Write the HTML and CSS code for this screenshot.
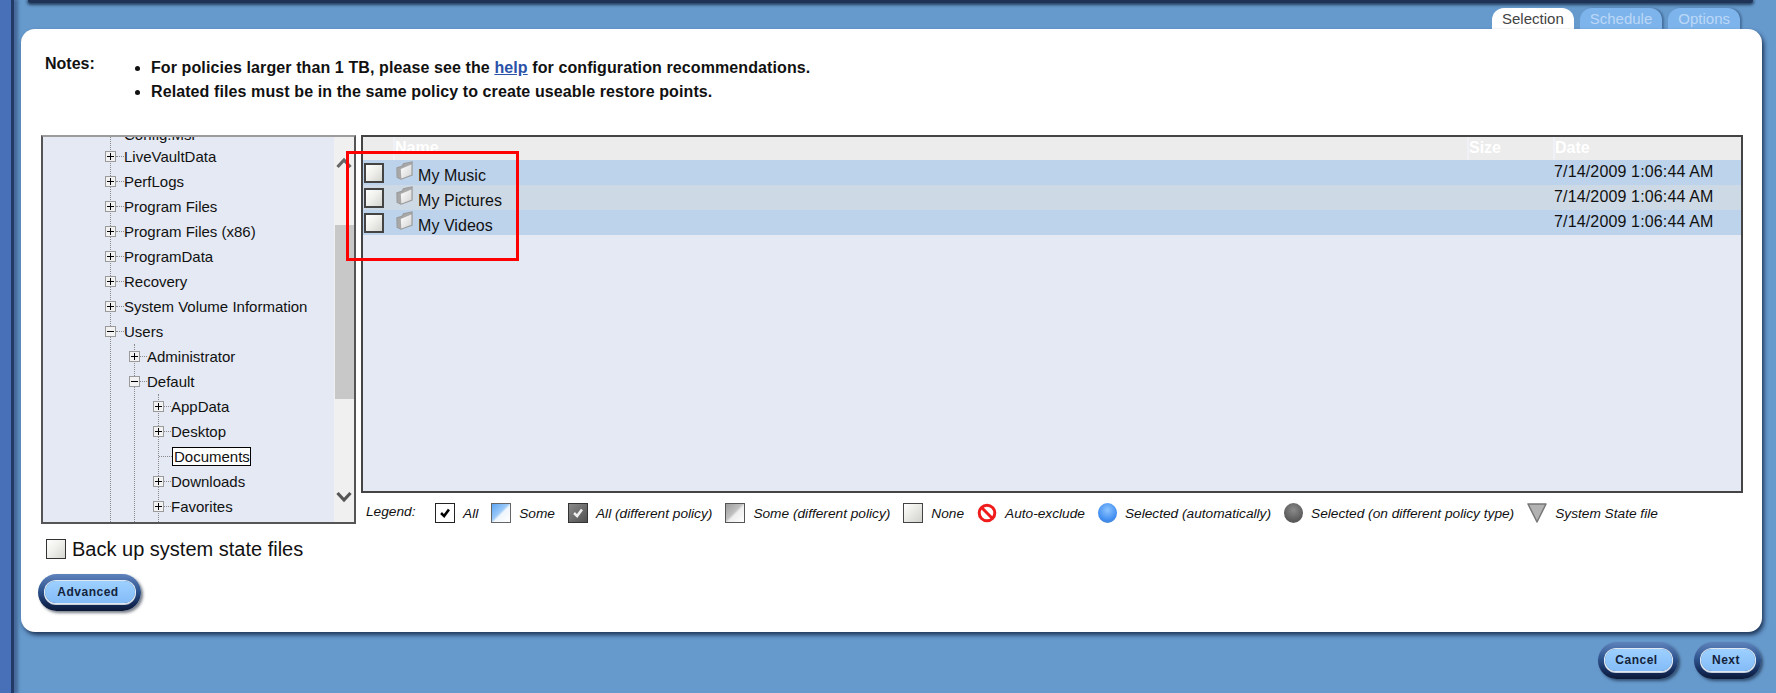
FILE: index.html
```html
<!DOCTYPE html>
<html lang="en">
<head>
<meta charset="utf-8">
<title>Selection</title>
<link rel="stylesheet" href="styles.css">
</head>
<body>
<svg class="defs" width="0" height="0" aria-hidden="true">
  <defs>
    <linearGradient id="fg" x1="0" y1="0" x2="1" y2="1">
      <stop offset="0" stop-color="#ffffff"/>
      <stop offset="1" stop-color="#d4d4d4"/>
    </linearGradient>
    <symbol id="folder" viewBox="0 0 16 18">
      <path d="M.8 6.500 5.500 5 7 2.500 15.200 .8V13.500L4.800 17.200 1 15.500Z" fill="#a8a8a8" stroke="#9a9a9a" stroke-width="1"/>
      <path d="M4.500 7.500 14.500 3.200V13L5 16.500Z" fill="url(#fg)"/>
    </symbol>
    <symbol id="check" viewBox="0 0 16 16">
      <path d="M3.500 8 7 11.500 12.500 4" fill="none" stroke="currentColor" stroke-width="3"/>
    </symbol>
  </defs>
</svg>
<div class="rail"></div>
<div class="main">
  <div class="topbar"></div>
  <nav class="tabs">
    <div class="tab tab-on">Selection</div>
    <div class="tab">Schedule</div>
    <div class="tab">Options</div>
  </nav>
  <section class="panel">
    <div class="notes">
      <div class="notes-label">Notes:</div>
      <ul class="notes-list">
        <li>For policies larger than 1 TB, please see the <a href="#">help</a> for configuration recommendations.</li>
        <li>Related files must be in the same policy to create useable restore points.</li>
      </ul>
    </div>
    <div class="work">
      <div class="tree">
        <div class="tree-view">
          <ul class="branch branch-root">
            <li><div class="row row-first"><span class="leaf"></span><span class="label">Config.Msi</span></div></li>
            <li><div class="row"><span class="exp"></span><span class="dash"></span><span class="label">LiveVaultData</span></div></li>
            <li><div class="row"><span class="exp"></span><span class="dash"></span><span class="label">PerfLogs</span></div></li>
            <li><div class="row"><span class="exp"></span><span class="dash"></span><span class="label">Program Files</span></div></li>
            <li><div class="row"><span class="exp"></span><span class="dash"></span><span class="label">Program Files (x86)</span></div></li>
            <li><div class="row"><span class="exp"></span><span class="dash"></span><span class="label">ProgramData</span></div></li>
            <li><div class="row"><span class="exp"></span><span class="dash"></span><span class="label">Recovery</span></div></li>
            <li><div class="row"><span class="exp"></span><span class="dash"></span><span class="label">System Volume Information</span></div></li>
            <li><div class="row"><span class="exp exp-open"></span><span class="dash"></span><span class="label">Users</span></div>
              <ul class="branch">
                <li><div class="row"><span class="exp"></span><span class="dash"></span><span class="label">Administrator</span></div></li>
                <li><div class="row"><span class="exp exp-open"></span><span class="dash"></span><span class="label">Default</span></div>
                  <ul class="branch">
                    <li><div class="row"><span class="exp"></span><span class="dash"></span><span class="label">AppData</span></div></li>
                    <li><div class="row"><span class="exp"></span><span class="dash"></span><span class="label">Desktop</span></div></li>
                    <li><div class="row"><span class="leaf"></span><span class="label label-sel">Documents</span></div></li>
                    <li><div class="row"><span class="exp"></span><span class="dash"></span><span class="label">Downloads</span></div></li>
                    <li><div class="row"><span class="exp"></span><span class="dash"></span><span class="label">Favorites</span></div></li>
                    <li><div class="row"><span class="exp"></span></div></li>
                  </ul>
                </li>
              </ul>
            </li>
          </ul>
        </div>
        <div class="scroll">
          <svg class="chev chev-up" viewBox="0 0 16 12"><path d="M1.500 10 8 3l6.500 7" fill="none" stroke="#666" stroke-width="3.200"/></svg>
          <div class="thumb"></div>
          <svg class="chev chev-down" viewBox="0 0 16 12"><path d="M1.500 2 8 9l6.500-7" fill="none" stroke="#555" stroke-width="3.200"/></svg>
        </div>
      </div>
      <div class="right">
        <div class="list">
          <div class="grid grid-head">
            <div></div>
            <div class="hcell">Name</div>
            <div class="hcell">Size</div>
            <div class="hcell">Date</div>
          </div>
          <div class="grid file file-a">
            <div class="cbcell"><span class="box"></span></div>
            <div class="namecell"><svg class="folder"><use href="#folder"/></svg><span class="fname">My Music</span></div>
            <div></div>
            <div class="date">7/14/2009 1:06:44 AM</div>
          </div>
          <div class="grid file file-b">
            <div class="cbcell"><span class="box"></span></div>
            <div class="namecell"><svg class="folder"><use href="#folder"/></svg><span class="fname">My Pictures</span></div>
            <div></div>
            <div class="date">7/14/2009 1:06:44 AM</div>
          </div>
          <div class="grid file file-a">
            <div class="cbcell"><span class="box"></span></div>
            <div class="namecell"><svg class="folder"><use href="#folder"/></svg><span class="fname">My Videos</span></div>
            <div></div>
            <div class="date">7/14/2009 1:06:44 AM</div>
          </div>
          <div class="redmark"></div>
        </div>
        <div class="legend">
          <span class="legend-title">Legend:</span>
          <div class="lg"><span class="mini mini-all"><svg class="tick"><use href="#check"/></svg></span>All</div>
          <div class="lg"><span class="mini mini-some"></span>Some</div>
          <div class="lg"><span class="mini mini-alld"><svg class="tick"><use href="#check"/></svg></span>All (different policy)</div>
          <div class="lg"><span class="mini mini-somed"></span>Some (different policy)</div>
          <div class="lg"><span class="mini mini-none"></span>None</div>
          <div class="lg"><svg class="sym" viewBox="0 0 20 20"><circle cx="10" cy="10" r="7.800" fill="#fff" stroke="#f01c1c" stroke-width="3"/><path d="M4.800 4.800 15.200 15.200" stroke="#f01c1c" stroke-width="3"/></svg>Auto-exclude</div>
          <div class="lg"><span class="dot dot-blue"></span>Selected (automatically)</div>
          <div class="lg"><span class="dot dot-gray"></span>Selected (on different policy type)</div>
          <div class="lg"><svg class="sym" viewBox="0 0 20 20"><path d="M1 1H19L10 19Z" fill="#b2b2b2" stroke="#777" stroke-width="1.500" stroke-linejoin="round"/></svg>System State file</div>
        </div>
      </div>
    </div>
    <label class="sysstate"><span class="box box-sys"></span>Back up system state files</label>
    <div class="adv"><div class="btn"><span class="btn-face btn-adv">Advanced</span></div></div>
  </section>
  <footer class="footer">
    <div class="btn"><span class="btn-face btn-cancel">Cancel</span></div>
    <div class="btn"><span class="btn-face btn-next">Next</span></div>
  </footer>
</div>
</body>
</html>
```

FILE: styles.css
```css
* { box-sizing: border-box; }
html, body { height: 100%; }
body {
  margin: 0;
  display: flex;
  height: 693px;
  overflow: hidden;
  background: #6699cc;
  font-family: "Liberation Sans", Arial, sans-serif;
  color: #111;
}
.defs { position: absolute; }
.rail {
  width: 11px;
  flex: none;
  background: #4870b8;
  box-shadow: 3px 0 0 #223a68, 6px 0 3px 1px #46699a;
}
.main {
  flex: 1;
  min-width: 0;
  display: flex;
  flex-direction: column;
  padding: 0 14px 0 10px;
}
.topbar {
  height: 3px;
  margin: 0 9px 0 7px;
  background: #1f3356;
  border-radius: 0 0 5px 5px;
  box-shadow: 0 1px 3px 1px #24405f;
}
.tabs {
  display: flex;
  justify-content: flex-end;
  gap: 6px;
  margin: 5px 22px 0 0;
  height: 21px;
}
.tab {
  height: 21px;
  padding: 3px 10px 0;
  border-radius: 12px 12px 0 0;
  background: #7eb4ec;
  color: #bcd8f6;
  font-size: 15px;
  line-height: 16px;
  box-shadow: 2px 0 2px #47719f;
}
.tab-on {
  background: #fff;
  color: #444;
  box-shadow: none;
}
.panel {
  height: 603px;
  background: #fff;
  border-radius: 14px;
  padding: 23px 19px 0 20px;
  box-shadow: 2px 3px 4px rgba(18, 38, 70, .85);
}
.notes {
  display: flex;
  height: 52px;
  font-size: 16px;
  font-weight: bold;
  color: #111;
}
.notes-label { width: 4px; margin-left: 4px; line-height: 24px; white-space: nowrap; }
.notes-list {
  margin: 4px 0 0;
  padding: 0 0 0 102px;
  line-height: 24px;
  letter-spacing: .1px;
}
.notes-list a { color: #2a52a8; }
.work {
  display: grid;
  grid-template-columns: 315px 1fr;
  gap: 5px;
  margin-top: 31px;
  height: 389px;
}
.tree {
  display: flex;
  background: #e4e9f3;
  border: 2px solid #555;
  border-top-color: #9c9c9c;
  overflow: hidden;
  height: 389px;
}
.tree-view {
  flex: 1;
  min-width: 0;
  overflow: hidden;
  padding-left: 67px;
  font-size: 15px;
}
.branch {
  list-style: none;
  margin: 0 0 0 23px;
  padding: 0;
  border-left: 1px dotted #8a8a8a;
}
.branch-root { margin: -13px 0 0; }
.branch-root > li > .row > .dash { width: 8px; }
.row {
  display: flex;
  align-items: center;
  height: 25px;
  margin-left: -6px;
  white-space: nowrap;
}
.row-first { height: 20px; }
.exp {
  width: 11px;
  height: 11px;
  flex: none;
  border: 1px solid #9a9a9a;
  background:
    linear-gradient(#000, #000) center / 7px 1px no-repeat,
    linear-gradient(#000, #000) center / 1px 7px no-repeat,
    #f2f2f2;
}
.exp-open {
  background:
    linear-gradient(#000, #000) center / 7px 1px no-repeat,
    #f2f2f2;
}
.dash {
  width: 7px;
  flex: none;
  border-top: 1px dotted #8a8a8a;
}
.leaf {
  width: 13px;
  margin-left: 6px;
  flex: none;
  border-top: 1px dotted #8a8a8a;
}
.label-sel {
  height: 19px;
  line-height: 17px;
  border: 1px solid #000;
  background: #fff;
  padding: 0 0 0 1px;
}
.scroll {
  width: 20px;
  flex: none;
  background: #f0f0f0;
  display: flex;
  flex-direction: column;
  align-items: center;
}
.chev { width: 16px; height: 12px; flex: none; }
.chev-up { margin-top: 20px; }
.chev-down { margin-top: 92px; }
.thumb { width: 19px; height: 174px; margin-top: 56px; margin-left: 1px; background: #c8c8c8; }
.right { min-width: 0; }
.list {
  position: relative;
  height: 358px;
  border: 2px solid #444;
  background: #e4e9f3;
}
.grid {
  display: grid;
  grid-template-columns: 30px 1074px 86px 1fr;
  height: 25px;
}
.grid-head {
  height: 23px;
  background: #ececec;
  color: #fff;
  font-weight: bold;
  font-size: 16px;
  line-height: 22px;
}
.hcell { border-left: 2px solid #f0f1f7; }
.file-a { background: #bdd3ec; }
.file-b { background: #cdd9e5; }
.cbcell { padding: 3px 0 0 1px; }
.box {
  display: block;
  width: 20px;
  height: 20px;
  border: 2px solid #444;
  background: linear-gradient(135deg, #fff 0%, #f0f0ec 45%, #d4d6d0 100%);
}
.namecell { display: flex; padding-left: 3px; }
.folder { width: 17px; height: 19px; margin-top: 1px; flex: none; }
.fname { font-size: 16px; line-height: 25px; margin: 3px 0 0 5px; letter-spacing: .05px; white-space: nowrap; }
.date { font-size: 16px; line-height: 24px; padding-left: 1px; letter-spacing: .15px; white-space: nowrap; }
.redmark {
  position: absolute;
  left: -17px;
  top: 14px;
  width: 173px;
  height: 110px;
  border: 3px solid #f00;
}
.legend {
  display: flex;
  align-items: center;
  gap: 13px;
  margin-top: 10px;
  padding-left: 5px;
  font-size: 13.700px;
  font-style: italic;
  color: #111;
  white-space: nowrap;
}
.legend-title { width: 49px; margin-top: -3px; margin-right: 7px; }
.lg { display: flex; align-items: center; gap: 8px; height: 20px; }
.mini {
  width: 20px;
  height: 20px;
  flex: none;
  display: flex;
  align-items: center;
  justify-content: center;
  border: 1px solid #444;
}
.mini-none { background: linear-gradient(135deg, #fff, #e8e8e4 50%, #d0d2cc); }
.mini-all { background: #fff; border-color: #222; color: #000; }
.mini-some { background: linear-gradient(135deg, #5aa4f4 0%, #9ccaf8 45%, #f0f6fc 55%, #fff 100%); border-color: #666; }
.mini-alld { background: linear-gradient(135deg, #8a8a8a, #505050); border-color: #333; color: #eee; }
.mini-somed { background: linear-gradient(135deg, #9c9c9c 0%, #c0c0c0 45%, #eee 55%, #fff 100%); border-color: #555; }
.tick { width: 14px; height: 14px; }
.sym { width: 20px; height: 20px; flex: none; }
.dot {
  width: 19px;
  height: 20px;
  flex: none;
  border-radius: 50%;
}
.dot-blue { background: radial-gradient(circle at 50% 35%, #8cc4ff, #3f8cf0 65%, #5a7fa8); }
.dot-gray { background: radial-gradient(circle at 50% 35%, #8a8a8a, #585858 70%, #777); }
.sysstate {
  display: flex;
  align-items: center;
  gap: 6px;
  margin: 15px 0 0 5px;
  font-size: 20px;
  line-height: 20px;
}
.box-sys { border-width: 1px; border-color: #333; }
.adv { display: flex; margin: 15px 0 0 -3px; }
.btn {
  display: flex;
  padding: 7px 6px 8px 7px;
  border-radius: 20px;
  background: linear-gradient(180deg, #5f83bc 0%, #2f558f 45%, #142a58 80%, #0c1a38 100%);
  box-shadow: 2px 2px 3px rgba(10, 20, 40, .55);
}
.btn-face {
  display: block;
  height: 22px;
  padding-right: 4px;
  border-radius: 12px;
  background: linear-gradient(180deg, #9dd0ff, #84bcf8);
  box-shadow: 0 0 0 1px #dfe8f2, 0 1px 0 1px #c8d0dc;
  color: #14233c;
  font-size: 12px;
  font-weight: bold;
  line-height: 22px;
  letter-spacing: .5px;
  text-align: center;
}
.btn-adv { width: 90px; }
.btn-cancel { width: 67px; }
.btn-next { width: 54px; }
.footer {
  display: flex;
  justify-content: flex-end;
  gap: 16px;
  margin: 10px 1px 0 0;
}
```
